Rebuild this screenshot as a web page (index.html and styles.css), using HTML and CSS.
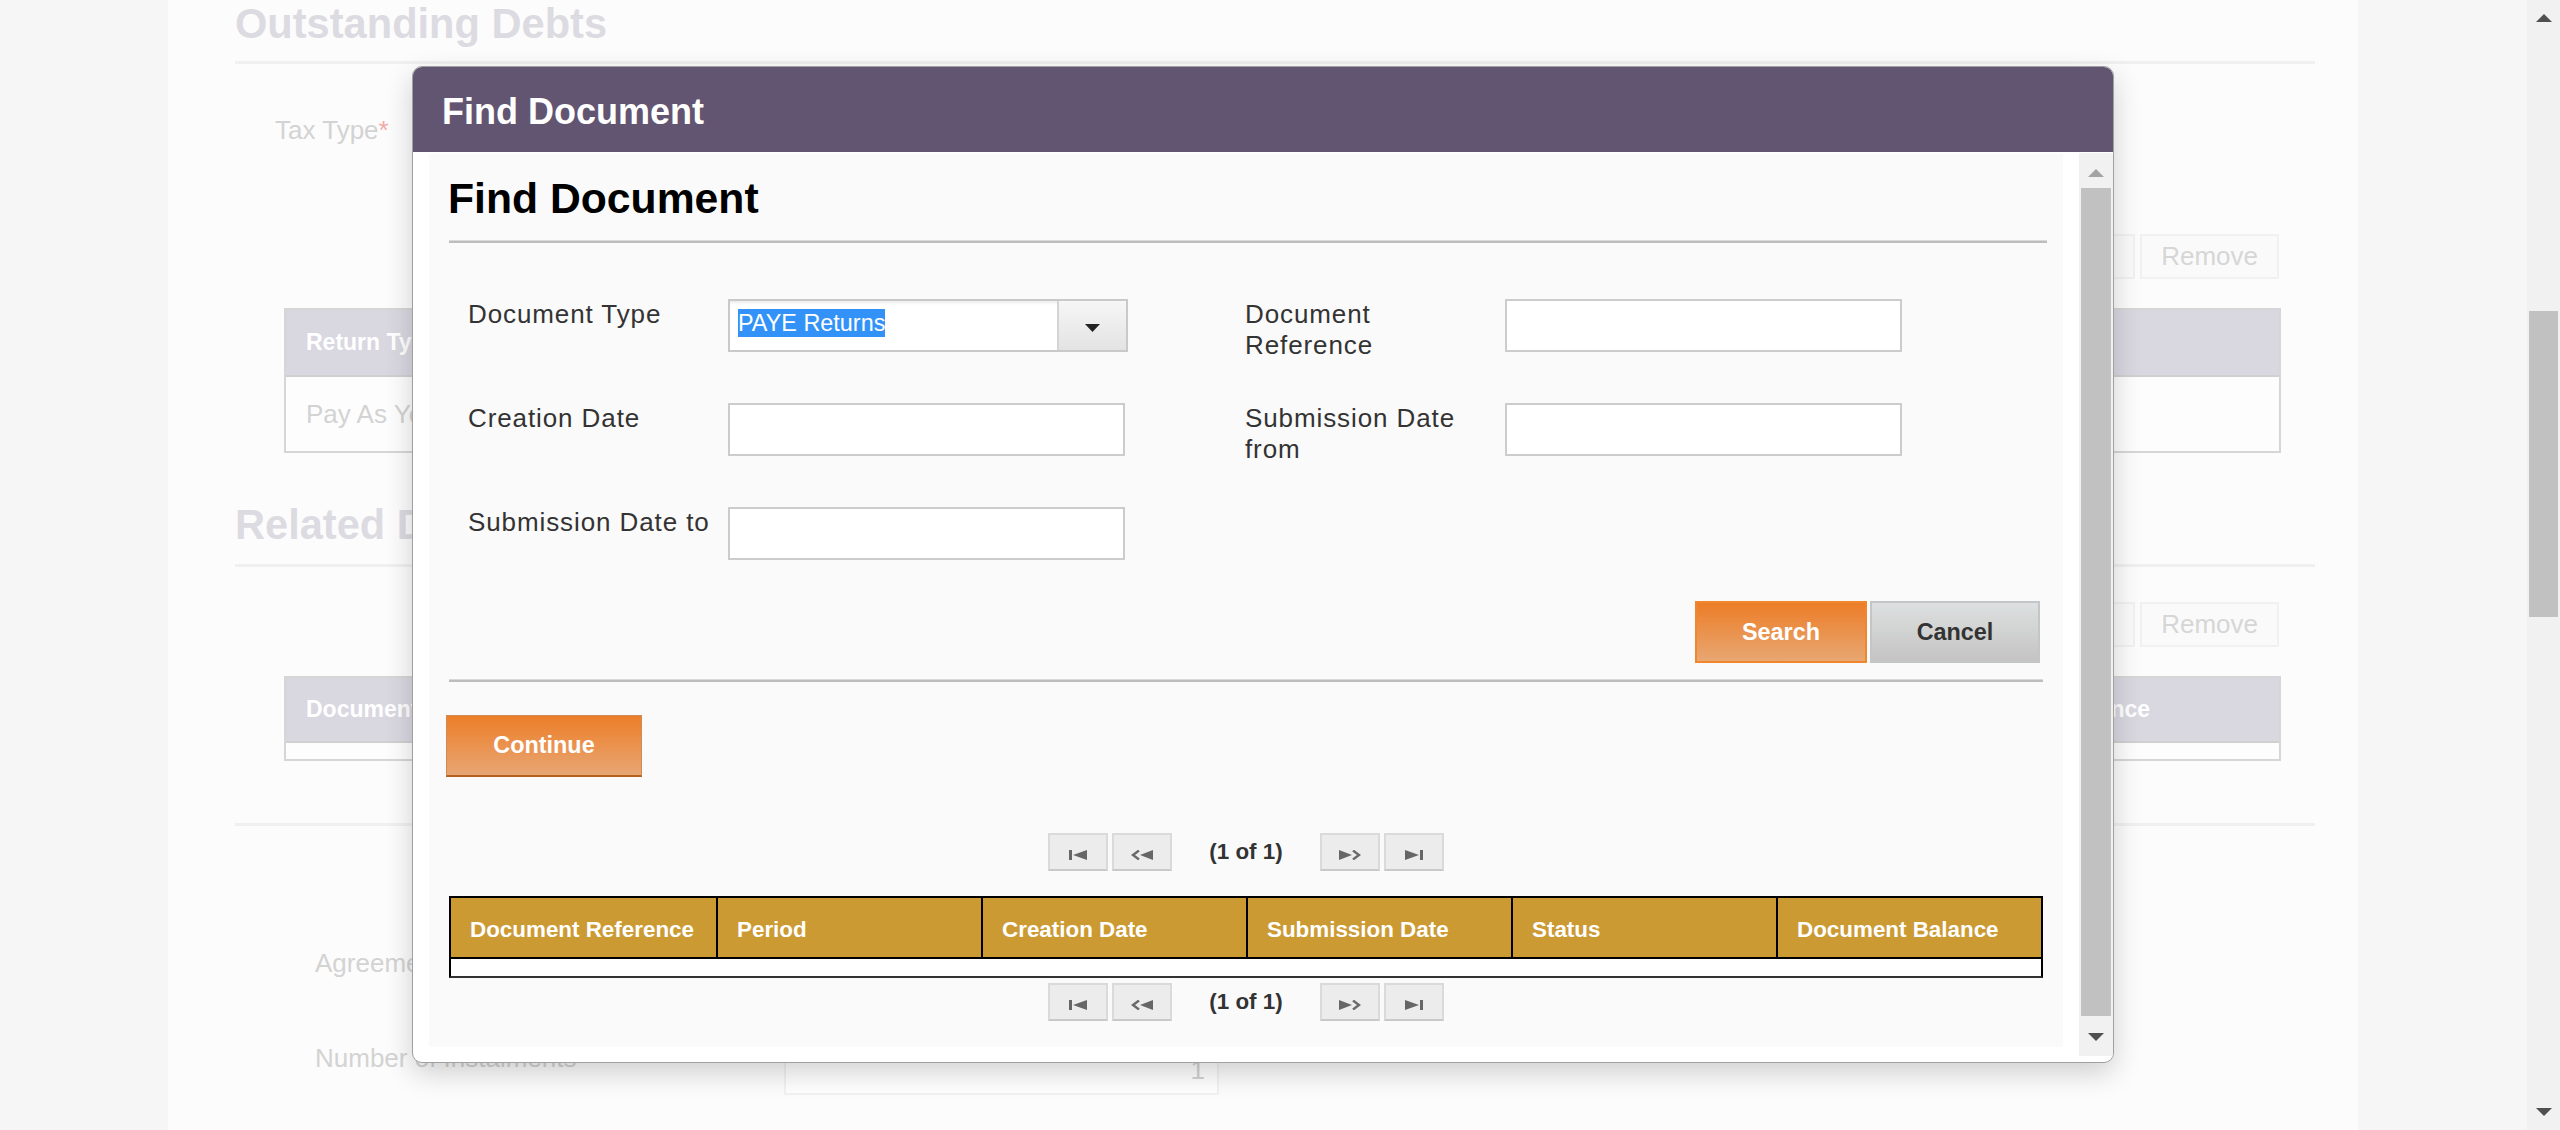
FILE: index.html
```html
<!DOCTYPE html>
<html lang="en">
<head>
<meta charset="utf-8">
<title>Find Document</title>
<link rel="stylesheet" href="styles.css">
</head>
<body>
<div class="viewport">
  <div class="page">
    <main class="content">
      <section class="sec">
        <h2 class="sec-title">Outstanding Debts</h2>
        <div class="sec-body">
          <div class="bg-field first"><span class="bg-label">Tax Type<span class="req">*</span></span></div>
          <div class="bg-toolbar"><button class="bg-btn" type="button">Add</button><button class="bg-btn" type="button">Remove</button></div>
          <div class="bg-table t1">
            <div class="bg-thead"><span>Return Type</span><span>Amount</span></div>
            <div class="bg-tbody"><span>Pay As You Earn</span></div>
          </div>
        </div>
      </section>
      <section class="sec s2">
        <h2 class="sec-title">Related Documents</h2>
        <div class="sec-body b2">
          <div class="bg-toolbar t2"><button class="bg-btn" type="button">Add</button><button class="bg-btn" type="button">Remove</button></div>
          <div class="bg-table tb2">
            <div class="bg-thead"><span>Document Reference</span><span>Document Balance</span></div>
            <div class="bg-tbody short"></div>
          </div>
        </div>
      </section>
      <section class="sec-plain">
        <div class="bg-field agree"><span class="bg-label">Agreement Date</span></div>
        <div class="bg-field inst"><span class="bg-label">Number of Instalments</span><span class="bg-input">1</span></div>
      </section>
    </main>

    <div class="modal" role="dialog" aria-labelledby="dlg-title">
      <div class="modal-header" id="dlg-title">Find Document</div>
      <div class="modal-body">
        <div class="panel">
          <h1 class="panel-title">Find Document</h1>
          <div class="rule"></div>
          <form class="search-form">
            <label class="f-label">Document Type</label>
            <div class="select">
              <span class="select-value"><span class="sel">PAYE Returns</span></span>
              <span class="select-btn"><svg width="15" height="8" viewBox="0 0 15 8"><path d="M0 0h15L7.5 8z" fill="#222"/></svg></span>
            </div>
            <label class="f-label">Document Reference</label>
            <input class="f-input" type="text">

            <label class="f-label">Creation Date</label>
            <input class="f-input" type="text">
            <label class="f-label">Submission Date from</label>
            <input class="f-input" type="text">

            <label class="f-label">Submission Date to</label>
            <input class="f-input" type="text">
          </form>
          <div class="actions">
            <button class="btn btn-primary" type="button">Search</button>
            <button class="btn btn-secondary" type="button">Cancel</button>
          </div>
          <div class="rule rule2"></div>
          <button class="btn btn-continue" type="button">Continue</button>

          <div class="pager">
            <span class="pg-btn"><svg width="18" height="10" viewBox="0 0 18 10"><rect x="0" y="0" width="3" height="10"/><path d="M18 0v10L4 5z"/></svg></span>
            <span class="pg-btn"><svg width="22" height="10" viewBox="0 0 22 10"><path d="M8 0.5L2 5l6 4.5" fill="none" stroke="#6a6a6a" stroke-width="2.4"/><path d="M22 0v10L9 5z"/></svg></span>
            <span class="pg-text">(1 of 1)</span>
            <span class="pg-btn"><svg width="22" height="10" viewBox="0 0 22 10"><path d="M0 0v10l13-5z"/><path d="M14 0.5L20 5l-6 4.5" fill="none" stroke="#6a6a6a" stroke-width="2.4"/></svg></span>
            <span class="pg-btn"><svg width="18" height="10" viewBox="0 0 18 10"><path d="M0 0v10l14-5z"/><rect x="15" y="0" width="3" height="10"/></svg></span>
          </div>

          <table class="results">
            <thead>
              <tr><th>Document Reference</th><th>Period</th><th>Creation Date</th><th>Submission Date</th><th>Status</th><th>Document Balance</th></tr>
            </thead>
            <tbody>
              <tr><td colspan="6"><div class="empty-row"></div></td></tr>
            </tbody>
          </table>

          <div class="pager bottom">
            <span class="pg-btn"><svg width="18" height="10" viewBox="0 0 18 10"><rect x="0" y="0" width="3" height="10"/><path d="M18 0v10L4 5z"/></svg></span>
            <span class="pg-btn"><svg width="22" height="10" viewBox="0 0 22 10"><path d="M8 0.5L2 5l6 4.5" fill="none" stroke="#6a6a6a" stroke-width="2.4"/><path d="M22 0v10L9 5z"/></svg></span>
            <span class="pg-text">(1 of 1)</span>
            <span class="pg-btn"><svg width="22" height="10" viewBox="0 0 22 10"><path d="M0 0v10l13-5z"/><path d="M14 0.5L20 5l-6 4.5" fill="none" stroke="#6a6a6a" stroke-width="2.4"/></svg></span>
            <span class="pg-btn"><svg width="18" height="10" viewBox="0 0 18 10"><path d="M0 0v10l14-5z"/><rect x="15" y="0" width="3" height="10"/></svg></span>
          </div>
        </div>
        <div class="mscroll">
          <div class="ms-arrow up"><svg width="16" height="8" viewBox="0 0 16 8"><path d="M0 8h16L8 0z" fill="#a3a3a3"/></svg></div>
          <div class="ms-thumb"></div>
          <div class="ms-arrow down"><svg width="16" height="8" viewBox="0 0 16 8"><path d="M0 0h16L8 8z" fill="#505050"/></svg></div>
        </div>
      </div>
    </div>
  </div>
  <div class="vscroll">
    <div class="vs-arrow"><svg width="16" height="8" viewBox="0 0 16 8"><path d="M0 8h16L8 0z" fill="#505050"/></svg></div>
    <div class="vs-track"><div class="vs-thumb"></div></div>
    <div class="vs-arrow"><svg width="16" height="8" viewBox="0 0 16 8"><path d="M0 0h16L8 8z" fill="#505050"/></svg></div>
  </div>
</div>
</body>
</html>
```

FILE: styles.css
```css
* { box-sizing: border-box; }
html, body { margin: 0; padding: 0; }
body {
  width: 2560px;
  height: 1130px;
  overflow: hidden;
  font-family: "Liberation Sans", Arial, Helvetica, sans-serif;
  background: #f6f6f6;
  color: #333;
}
.viewport { display: flex; height: 1130px; }
.page {
  flex: 1;
  position: relative;
  background: #f6f6f6;
  overflow: hidden;
}

/* ---------- background page ---------- */
.content {
  width: 2190px;
  height: 1130px;
  margin-left: 168px;
  background: #fcfcfc;
  padding: 0 43px 0 67px;
}
.sec-title {
  margin: 0;
  font-size: 41.6px;
  line-height: 48px;
  font-weight: bold;
  color: #dddbe2;
}
.sec-body { border-top: 3px solid #f0f0f0; margin-top: 13px; }
.sec-body.b2 { margin-top: 15px; }
.s2 { margin-top: 48px; }
.bg-field { display: flex; align-items: flex-start; }
.bg-field.first { margin-top: 51px; padding-left: 40px; }
.bg-label { font-size: 26px; line-height: 31px; color: #d3d3d3; }
.req { color: #f4a8a8; }
.bg-toolbar {
  display: flex;
  justify-content: flex-end;
  gap: 5px;
  margin-top: 88px;
  padding-right: 36px;
}
.bg-toolbar.t2 { margin-top: 35px; }
.bg-btn {
  height: 45px;
  padding: 0 19px;
  border: 2px solid #f1f1f1;
  background: #fafafa;
  color: #d6d6d6;
  font-family: inherit;
  font-size: 26px;
}
.bg-table {
  margin: 29px 34px 0 49px;
  border: 2px solid #d6d6d6;
  background: #fdfdfd;
}
.bg-thead {
  display: grid;
  grid-template-columns: 1637px 1fr;
  height: 67px;
  align-items: center;
  background: #d9d7e0;
  border-bottom: 2px solid #d0d0d0;
  color: #fff;
  font-weight: bold;
  font-size: 23px;
}
.bg-thead > span { padding-left: 20px; white-space: nowrap; }
.tb2 .bg-thead { height: 65px; }
.bg-tbody {
  height: 74px;
  display: flex;
  align-items: center;
  padding-left: 20px;
  font-size: 26px;
  color: #d3d3d3;
}
.bg-tbody.short { height: 16px; }
.sec-plain { margin-top: 62px; border-top: 3px solid #f0f0f0; }
.bg-field.agree { margin-top: 122px; padding-left: 80px; }
.bg-field.inst { margin-top: 64px; padding-left: 80px; }
.bg-field.inst .bg-label { width: 469px; }
.bg-input {
  width: 435px;
  height: 52px;
  border: 2px solid #f2f2f2;
  background: #fff;
  color: #d3d3d3;
  font-size: 26px;
  text-align: right;
  padding: 10px 12px 0 0;
}

/* ---------- page scrollbar ---------- */
.vscroll {
  width: 33px;
  background: #f1f1f1;
  display: flex;
  flex-direction: column;
}
.vs-arrow {
  height: 36px;
  display: flex;
  align-items: center;
  justify-content: center;
}
.vs-track { flex: 1; padding: 0 2px 0 2px; }
.vs-thumb { margin-top: 275px; height: 306px; background: #c1c1c1; }

/* ---------- modal ---------- */
.modal {
  position: absolute;
  left: 412px;
  top: 66px;
  width: 1702px;
  height: 997px;
  background: #fff;
  border: 1px solid #a0a0a0;
  border-radius: 10px;
  box-shadow: 0 10px 28px rgba(0, 0, 0, 0.18);
  display: flex;
  flex-direction: column;
  overflow: hidden;
}
.modal-header {
  flex: none;
  height: 85px;
  background: #625572;
  color: #fff;
  font-size: 36px;
  font-weight: bold;
  display: flex;
  align-items: center;
  padding: 5px 0 0 29px;
}
.modal-body {
  flex: 1;
  min-height: 0;
  display: flex;
  padding: 2px 0 6px 16px;
}
.panel {
  flex: 1;
  min-width: 0;
  margin: 0 16px 9px 0;
  background: #fafafa;
  padding: 20px 16px 0 20px;
  overflow: hidden;
}
.panel-title {
  margin: 0 0 0 -1px;
  font-size: 42.7px;
  line-height: 48px;
  font-weight: bold;
  color: #000;
}
.rule {
  margin-top: 18px;
  height: 3px;
  border-top: 1px solid #d9d9d9;
  border-bottom: 2px solid #bdbdbd;
}
.rule2 { margin-top: 16px; margin-right: 4px; }

.search-form {
  margin-top: 56px;
  padding-left: 19px;
  display: grid;
  grid-template-columns: 260px 517px 260px 397px;
  grid-auto-rows: 53px;
  row-gap: 51px;
}
.f-label {
  font-size: 26px;
  line-height: 31px;
  letter-spacing: 0.9px;
  color: #333;
  padding-right: 8px;
}
.f-input {
  width: 397px;
  height: 53px;
  border: 2px solid #cccccc;
  background: #fff;
  margin: 0;
  padding: 0 8px;
  font-family: inherit;
  font-size: 23px;
}
.select {
  width: 400px;
  height: 53px;
  border: 2px solid #c9c9c9;
  background: #fff;
  display: flex;
  box-shadow: inset 0 3px 3px -1px rgba(0, 0, 0, 0.08);
}
.select-value {
  flex: 1;
  padding: 8px 0 0 8px;
}
.sel {
  display: inline-block;
  background: #3392f8;
  color: #fff;
  font-size: 23.4px;
  line-height: 28px;
}
.select-btn {
  width: 69px;
  border-left: 2px solid #d4d4d4;
  background: linear-gradient(#f6f6f6, #e3e3e3);
  display: flex;
  align-items: center;
  justify-content: center;
  padding-top: 4px;
}

.actions {
  display: flex;
  justify-content: flex-end;
  gap: 3px;
  margin-top: 41px;
  padding-right: 7px;
}
.btn {
  height: 62px;
  font-family: inherit;
  font-size: 23.4px;
  font-weight: bold;
  padding: 0;
  cursor: pointer;
}
.btn-primary {
  width: 172px;
  border: 2px solid #f0862e;
  background: linear-gradient(#ec7d28, #e8a772);
  color: #fff;
}
.btn-secondary {
  width: 170px;
  border: 2px solid #c2c6c6;
  background: linear-gradient(#dde0e0, #c5c3c3);
  color: #333;
}
.btn-continue {
  display: block;
  margin: 33px 0 0 -3px;
  width: 196px;
  border: 1px solid #cf8b55;
  border-bottom: 2px solid #b3611c;
  background: linear-gradient(#ec7e29, #e8a673);
  color: #fff;
}

.pager {
  width: 1594px;
  margin-top: 56px;
  display: flex;
  justify-content: center;
  align-items: center;
  gap: 4px;
}
.pager.bottom { margin-top: 5px; }
.pg-btn {
  width: 60px;
  height: 38px;
  border: 2px solid #dadada;
  border-bottom-color: #c9c9c9;
  background: #ececec;
  display: flex;
  align-items: center;
  justify-content: center;
  padding-top: 6px;
}
.pg-btn svg { fill: #666; display: block; }
.pg-text {
  margin: 0 33px;
  font-size: 22.4px;
  font-weight: bold;
  color: #333;
}

.results {
  width: 1594px;
  margin-top: 25px;
  table-layout: fixed;
  border-collapse: separate;
  border-spacing: 0;
  border: 2px solid #000;
  border-bottom-color: #333;
}
.results th {
  background: #cc9a33;
  color: #fff;
  font-size: 22.4px;
  font-weight: bold;
  text-align: left;
  line-height: 55px;
  padding: 4px 0 0 19px;
  border-bottom: 2px solid #000;
  border-left: 2px solid #000;
  white-space: nowrap;
}
.results th:first-child { border-left: 0; }
.results td { padding: 0; background: #fff; }
.empty-row { height: 17px; }

/* modal scrollbar */
.mscroll {
  width: 34px;
  margin-top: -1px;
  background: #f1f1f1;
  display: flex;
  flex-direction: column;
}
.ms-arrow {
  display: flex;
  align-items: center;
  justify-content: center;
}
.ms-arrow.up { height: 35px; padding-top: 4px; }
.ms-arrow.down { height: 40px; padding-top: 2px; }
.ms-thumb { flex: 1; margin: 0 2px; background: #c1c1c1; }
```
